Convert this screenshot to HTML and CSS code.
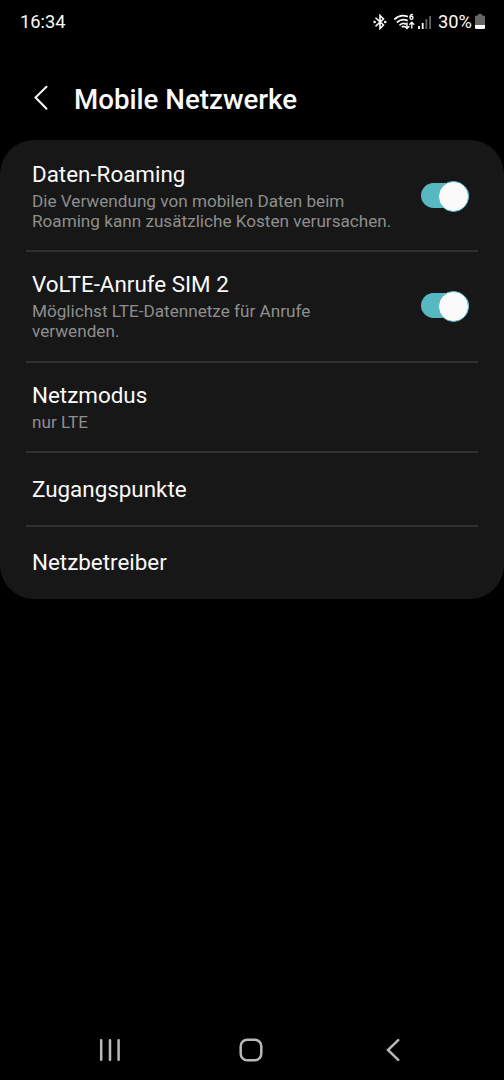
FILE: index.html
```html
<!DOCTYPE html>
<html lang="de">
<head>
    <meta charset="UTF-8">
    <meta name="viewport" content="width=device-width, initial-scale=1.0">
    <title>Mobile Netzwerke</title>
    <link rel="stylesheet" href="styles.css">
</head>
<body>
    <div class="status">
        <span class="time">16:34</span>
        <div class="status-icons">
            <svg class="bluetooth" width="14" height="16" viewBox="0 0 14 16">
                <path d="M3 4.2 L10.5 11 L7 14.5 V1.5 L10.5 5 L3 11.8" />
                <circle class="fill" cx="1.6" cy="8" r="1.3" />
                <circle class="fill" cx="12.2" cy="8" r="1.3" />
            </svg>
            <svg class="wifi" width="21" height="17" viewBox="0 0 21 17">
                <path d="M0.8 6 Q6.5 0.8 13.2 3.4 M3.4 9 Q8 5.2 13 7.4 M6 11.8 Q8.8 9.6 11.8 11" />
                <path d="M8.4 13.6 H10.4" />
                <path class="thin" d="M18.6 1.4 Q16 1.6 16 4.4 M16 4.8 a1.5 1.6 0 1 0 3 0 a1.5 1.6 0 1 0 -3 0" />
                <path class="thin" d="M13 10 V15.3 M11 13.4 L13 15.5 L15 13.4 M17.8 15 V9.4 M15.8 11.3 L17.8 9.2 L19.8 11.3" />
            </svg>
            <svg class="signal" width="14" height="14" viewBox="0 0 14 14">
                <path d="M1 14 V11 M4.7 14 V8" />
                <path class="dim" d="M8.4 14 V4 M12.1 14 V1" />
            </svg>
            <span class="percent">30%</span>
            <svg class="battery" width="10" height="15" viewBox="0 0 10 15">
                <path class="shell" d="M3 0 H7 V1.5 H8.5 Q10 1.5 10 3 V13.5 Q10 15 8.5 15 H1.5 Q0 15 0 13.5 V3 Q0 1.5 1.5 1.5 H3 Z" />
                <path class="level" d="M0 11 H10 V13.5 Q10 15 8.5 15 H1.5 Q0 15 0 13.5 Z" />
            </svg>
        </div>
    </div>

    <div class="header">
        <svg class="back" width="16" height="26" viewBox="0 0 16 26">
            <path d="M13.5 1.8 L2.5 12.5 L13.5 23.8" />
        </svg>
        <h1>Mobile Netzwerke</h1>
    </div>

    <div class="card">
        <div class="item roaming">
            <div class="text">
                <div class="label">Daten-Roaming</div>
                <div class="desc">Die Verwendung von mobilen Daten beim<br>Roaming kann zusätzliche Kosten verursachen.</div>
            </div>
            <div class="toggle"></div>
        </div>
        <div class="item volte">
            <div class="text">
                <div class="label">VoLTE-Anrufe SIM 2</div>
                <div class="desc">Möglichst LTE-Datennetze für Anrufe<br>verwenden.</div>
            </div>
            <div class="toggle"></div>
        </div>
        <div class="item mode">
            <div class="text">
                <div class="label">Netzmodus</div>
                <div class="desc">nur LTE</div>
            </div>
        </div>
        <div class="item single">
            <div class="label">Zugangspunkte</div>
        </div>
        <div class="item single">
            <div class="label">Netzbetreiber</div>
        </div>
    </div>

    <div class="navbar">
        <svg width="22" height="22" viewBox="0 0 22 22">
            <path d="M2.2 1.2 V20.8 M11 1.2 V20.8 M19.6 1.2 V20.8" />
        </svg>
        <svg width="24" height="24" viewBox="0 0 24 24">
            <rect x="1.7" y="1.7" width="20.6" height="20.6" rx="6.5" />
        </svg>
        <svg width="14" height="22" viewBox="0 0 14 22">
            <path d="M12.2 1.2 L2 11 L12.2 20.8" />
        </svg>
    </div>
</body>
</html>
```
FILE: styles.css
```css
* {
    box-sizing: border-box;
}
body {
    margin: 0;
    height: 1080px;
    background: #000;
    color: #fafafa;
    font-family: Roboto, sans-serif;
    display: flex;
    flex-direction: column;
    overflow: hidden;
}
svg {
    display: block;
    flex: none;
    fill: none;
    stroke: #fafafa;
    stroke-linecap: round;
}
.status {
    height: 43px;
    padding: 0 19px 0 20px;
    display: flex;
    align-items: center;
    justify-content: space-between;
    font-size: 18.3px;
}
.status-icons {
    display: flex;
    align-items: center;
}
.status .fill {
    fill: #fafafa;
    stroke: none;
}
.bluetooth {
    margin-right: 7px;
    stroke-width: 1.6;
}
.wifi {
    margin-right: 3px;
    stroke-width: 1.7;
}
.wifi .thin {
    stroke-width: 1.4;
}
.signal {
    margin-right: 6px;
    stroke-width: 1.8;
    stroke-linecap: butt;
}
.signal .dim {
    stroke: #666;
}
.battery {
    margin-left: 3px;
    stroke: none;
}
.battery .shell {
    fill: #666;
}
.battery .level {
    fill: #fff;
}
.header {
    height: 97px;
    padding: 15px 0 0 33px;
    display: flex;
    align-items: center;
}
.back {
    margin-top: -2px;
    stroke-width: 2;
}
h1 {
    margin: 0 0 0 25px;
    font-size: 27.7px;
    font-weight: 500;
}
.card {
    height: 459px;
    padding: 0 26px;
    background: #171717;
    border-radius: 34px;
}
.item {
    padding: 0 9px 0 6px;
    display: flex;
    align-items: center;
    justify-content: space-between;
    border-bottom: 2px solid #303030;
}
.item:last-child {
    border-bottom: none;
}
.roaming {
    height: 112px;
}
.volte {
    height: 111px;
    padding-bottom: 2px;
}
.mode {
    height: 90px;
    padding-bottom: 1px;
}
.single {
    height: 74px;
}
.single:last-child {
    height: 72px;
    padding-bottom: 2px;
}
.label {
    font-size: 22.4px;
    line-height: 29px;
}
.desc {
    margin-top: 2px;
    font-size: 17.15px;
    line-height: 20px;
    color: #8e8e8e;
    white-space: nowrap;
}
.toggle {
    position: relative;
    flex: none;
    width: 48px;
    height: 25px;
    border-radius: 13px;
    background: #57b8c1;
}
.toggle::after {
    content: "";
    position: absolute;
    top: -2px;
    right: 0;
    width: 29px;
    height: 29px;
    border: 1px solid #57b8c1;
    border-radius: 50%;
    background: #fafafa;
}
.navbar {
    margin-top: auto;
    height: 60px;
    padding: 0 104px 0 99px;
    display: flex;
    align-items: center;
    justify-content: space-between;
}
.navbar svg {
    stroke: #b8b8b8;
    stroke-width: 2.5;
}
.navbar svg:nth-child(2) {
    margin-right: 5px;
}
```
